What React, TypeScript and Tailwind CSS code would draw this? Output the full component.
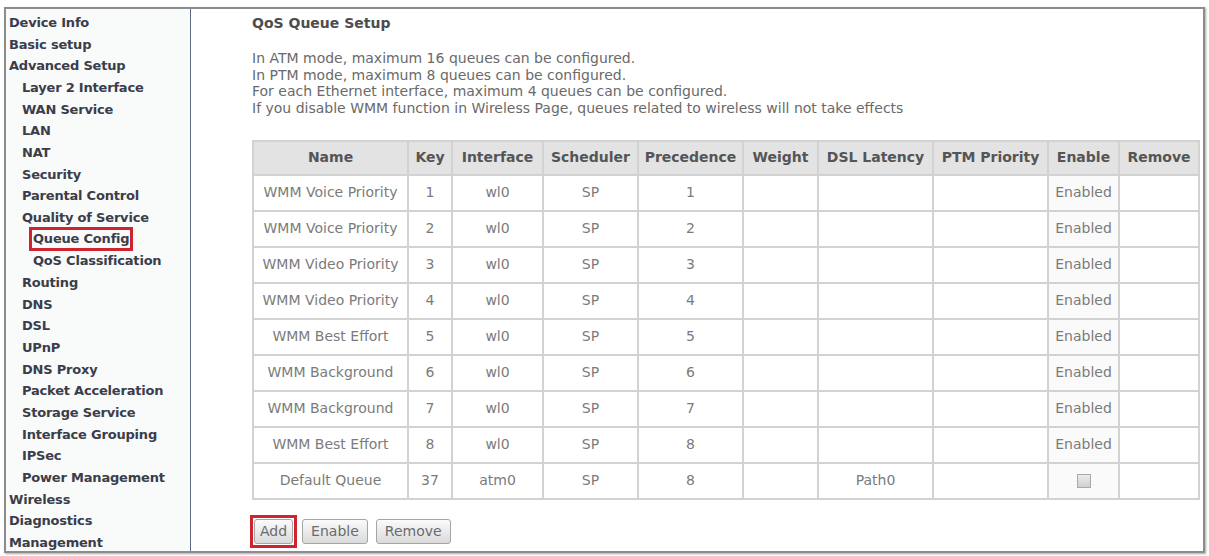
import React from 'react';

type NavItem = { label: string; level: 0 | 1 | 2; active?: boolean };

const navItems: NavItem[] = [
  { label: 'Device Info', level: 0 },
  { label: 'Basic setup', level: 0 },
  { label: 'Advanced Setup', level: 0 },
  { label: 'Layer 2 Interface', level: 1 },
  { label: 'WAN Service', level: 1 },
  { label: 'LAN', level: 1 },
  { label: 'NAT', level: 1 },
  { label: 'Security', level: 1 },
  { label: 'Parental Control', level: 1 },
  { label: 'Quality of Service', level: 1 },
  { label: 'Queue Config', level: 2, active: true },
  { label: 'QoS Classification', level: 2 },
  { label: 'Routing', level: 1 },
  { label: 'DNS', level: 1 },
  { label: 'DSL', level: 1 },
  { label: 'UPnP', level: 1 },
  { label: 'DNS Proxy', level: 1 },
  { label: 'Packet Acceleration', level: 1 },
  { label: 'Storage Service', level: 1 },
  { label: 'Interface Grouping', level: 1 },
  { label: 'IPSec', level: 1 },
  { label: 'Power Management', level: 1 },
  { label: 'Wireless', level: 0 },
  { label: 'Diagnostics', level: 0 },
  { label: 'Management', level: 0 },
];

interface Queue {
  name: string;
  key: number;
  iface: string;
  precedence: number;
  latency?: string;
  enabled: boolean;
}

const queues: Queue[] = [
  { name: 'WMM Voice Priority', key: 1, iface: 'wl0', precedence: 1, enabled: true },
  { name: 'WMM Voice Priority', key: 2, iface: 'wl0', precedence: 2, enabled: true },
  { name: 'WMM Video Priority', key: 3, iface: 'wl0', precedence: 3, enabled: true },
  { name: 'WMM Video Priority', key: 4, iface: 'wl0', precedence: 4, enabled: true },
  { name: 'WMM Best Effort', key: 5, iface: 'wl0', precedence: 5, enabled: true },
  { name: 'WMM Background', key: 6, iface: 'wl0', precedence: 6, enabled: true },
  { name: 'WMM Background', key: 7, iface: 'wl0', precedence: 7, enabled: true },
  { name: 'WMM Best Effort', key: 8, iface: 'wl0', precedence: 8, enabled: true },
  { name: 'Default Queue', key: 37, iface: 'atm0', precedence: 8, latency: 'Path0', enabled: false },
];

const columns = [
  { title: 'Name', w: 'w-[155px]' },
  { title: 'Key', w: 'w-[44px]' },
  { title: 'Interface', w: 'w-[91px]' },
  { title: 'Scheduler', w: 'w-[95px]' },
  { title: 'Precedence', w: 'w-[105px]' },
  { title: 'Weight', w: 'w-[75px]' },
  { title: 'DSL Latency', w: 'w-[115px]' },
  { title: 'PTM Priority', w: 'w-[115px]' },
  { title: 'Enable', w: 'w-[71px]' },
  { title: 'Remove', w: 'w-[80px]' },
];

const levelIndent = ['pl-[3px]', 'pl-[16px]', 'pl-[27px]'];

const cell = 'border-2 border-[#d2d2d2] text-center whitespace-nowrap';

function Button({ label, tight }: { label: string; tight?: boolean }) {
  return (
    <button
      className={`h-[25px] ${tight ? 'px-[5px]' : 'px-[8px]'} rounded-[3px] border border-[#a5a5a5] bg-gradient-to-b from-[#fbfbfb] to-[#dadada] text-[14px] text-[#6b6b6b] leading-none`}
    >
      {label}
    </button>
  );
}

export default function App() {
  return (
    <div className="w-[1209px] h-[556px] bg-white pt-[7px] pl-[4px] pr-[4px] pb-[3px] font-['DejaVu_Sans',sans-serif]">
      <div className="flex h-full border-2 border-[#8c8c8c] shadow-[1px_1px_2px_rgba(0,0,0,0.35)]">
        {/* left menu */}
        <nav className="w-[185px] shrink-0 bg-[#f9fafa] border-r border-[#5b6a80] pt-[3px]">
          {navItems.map((item) => (
            <div
              key={item.label}
              className={`${levelIndent[item.level]} h-[21.67px] flex items-center text-[13px] font-bold text-[#3b3d4a] whitespace-nowrap tracking-[-0.2px]`}
            >
              {item.active ? (
                <span className="-ml-[4px] px-[1px] border-[3px] border-[#cf2430] leading-[18px]">
                  {item.label}
                </span>
              ) : (
                item.label
              )}
            </div>
          ))}
        </nav>

        {/* page body */}
        <main className="flex-1 pl-[61px] pt-[4px]">
          <h1 className="text-[14px] font-bold text-[#4d4d4d] leading-[20px]">QoS Queue Setup</h1>
          <div className="mt-[17px] text-[14px] leading-[16.7px] text-[#6a6a6a]">
            <p>In ATM mode, maximum 16 queues can be configured.</p>
            <p>In PTM mode, maximum 8 queues can be configured.</p>
            <p>For each Ethernet interface, maximum 4 queues can be configured.</p>
            <p>If you disable WMM function in Wireless Page, queues related to wireless will not take effects</p>
          </div>

          <table className="mt-[23px] table-fixed w-[946px] border-collapse text-[14px]">
            <thead>
              <tr className="h-[34px] bg-[#e3e3e3]">
                {columns.map((c) => (
                  <th key={c.title} className={`${cell} ${c.w} font-bold text-[#555]`}>
                    {c.title}
                  </th>
                ))}
              </tr>
            </thead>
            <tbody className="text-[#7b7b7b]">
              {queues.map((q, i) => (
                <tr key={i} className="h-[36px]">
                  <td className={cell}>{q.name}</td>
                  <td className={cell}>{q.key}</td>
                  <td className={cell}>{q.iface}</td>
                  <td className={cell}>SP</td>
                  <td className={cell}>{q.precedence}</td>
                  <td className={cell}></td>
                  <td className={cell}>{q.latency ?? ''}</td>
                  <td className={cell}></td>
                  <td className={`${cell} bg-[#fafafa]`}>
                    {q.enabled ? (
                      'Enabled'
                    ) : (
                      <span className="inline-block align-middle w-[14px] h-[14px] border border-[#a9a9a9] bg-gradient-to-b from-[#ececec] to-[#cfcfcf]" />
                    )}
                  </td>
                  <td className={cell}></td>
                </tr>
              ))}
            </tbody>
          </table>

          <div className="mt-[15px] flex items-center -ml-[2px]">
            <span className="border-[3px] border-[#cf2430] p-[1px]">
              <Button label="Add" tight />
            </span>
            <span className="ml-[5px]">
              <Button label="Enable" />
            </span>
            <span className="ml-[8px]">
              <Button label="Remove" />
            </span>
          </div>
        </main>
      </div>
    </div>
  );
}
